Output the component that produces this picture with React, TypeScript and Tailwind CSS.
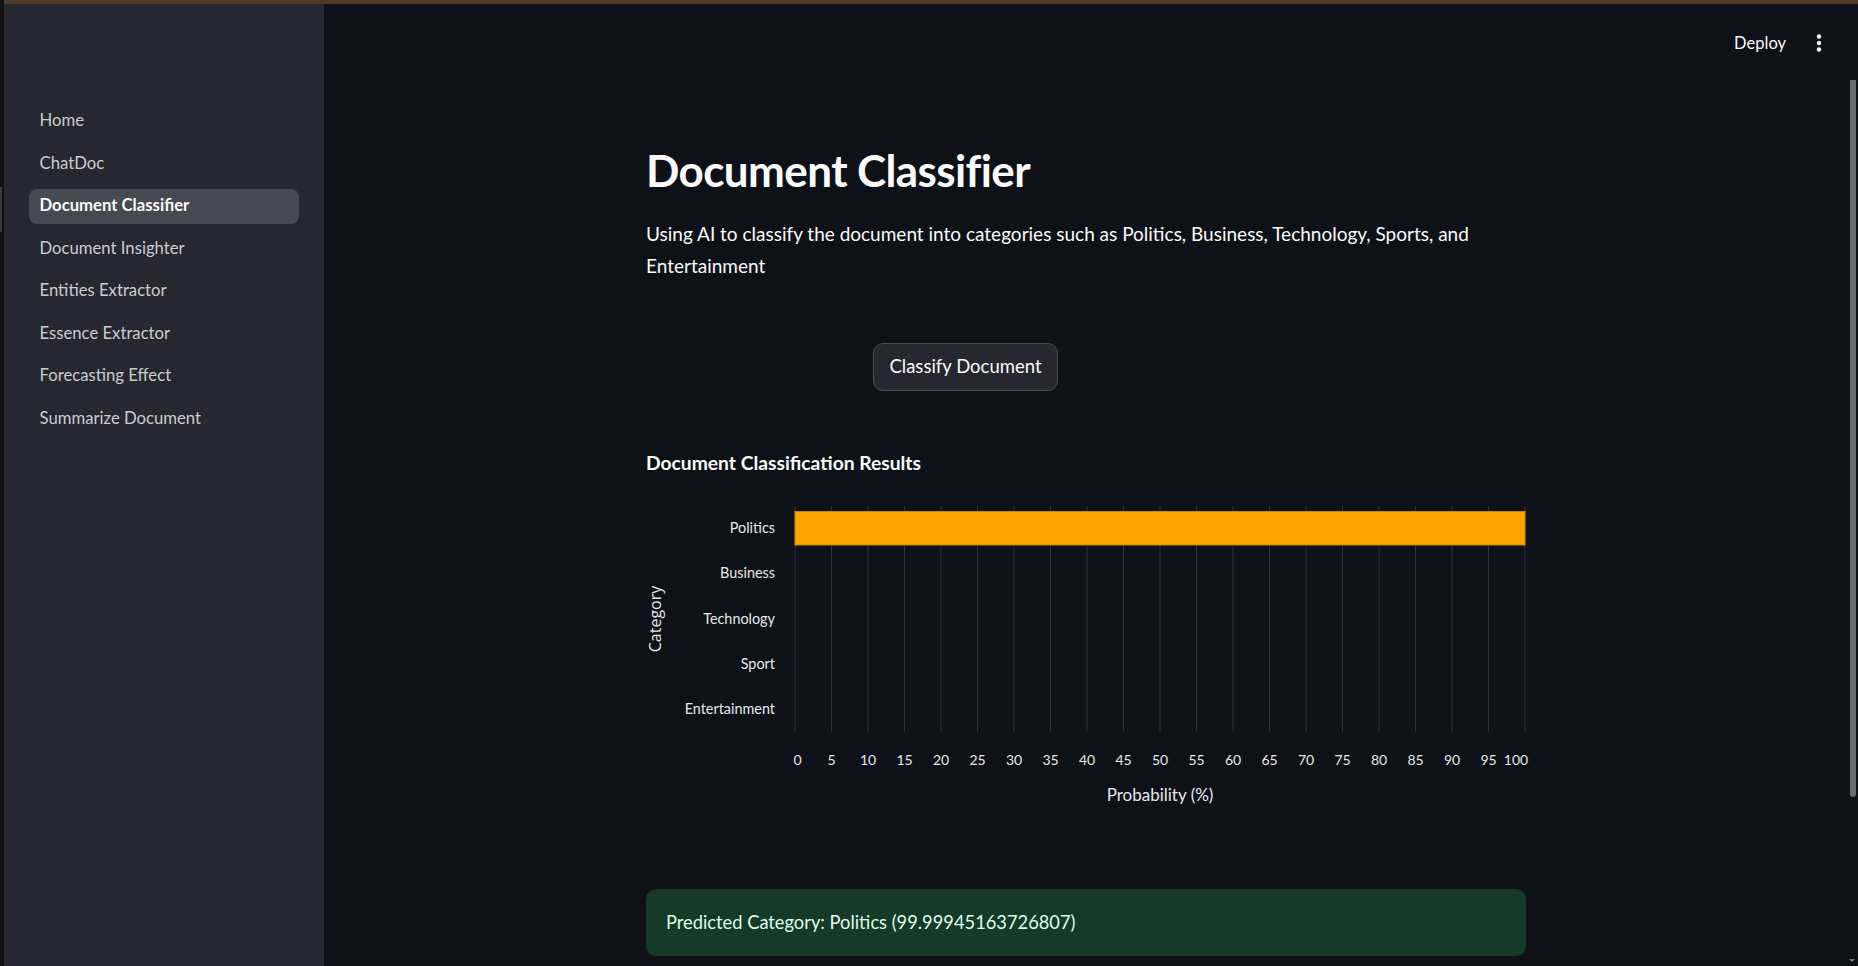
import React from "react";

const navItems = [
  "Home",
  "ChatDoc",
  "Document Classifier",
  "Document Insighter",
  "Entities Extractor",
  "Essence Extractor",
  "Forecasting Effect",
  "Summarize Document",
];

const categories = [
  { name: "Politics", y: 53 },
  { name: "Business", y: 98 },
  { name: "Technology", y: 144.5 },
  { name: "Sport", y: 189.6 },
  { name: "Entertainment", y: 234.6 },
];

function Chart() {
  const ticks = Array.from({ length: 21 }, (_, i) => i * 5);
  const x0 = 149;
  const scale = 7.3;
  return (
    <svg width="880" height="380" className="block overflow-visible">
      {ticks.map((t) => (
        <line
          key={`g${t}`}
          x1={x0 + t * scale}
          x2={x0 + t * scale}
          y1={32}
          y2={258}
          stroke="#2d3038"
          strokeWidth={1}
        />
      ))}
      <rect x={x0} y={37.5} width={730} height={33.5} fill="#ffa500" stroke="#c4860e" strokeWidth={1} />
      {categories.map((c) => (
        <text
          key={c.name}
          x={129}
          y={c.y}
          textAnchor="end"
          dominantBaseline="central"
          fill="#e8e8ea"
          fontSize="14.4"
          fontFamily="Lato, sans-serif"
        >
          {c.name}
        </text>
      ))}
      {ticks.map((t) => {
        let x = x0 + t * scale;
        if (t === 0) x += 2.5;
        if (t === 100) x -= 9;
        return (
          <text
            key={`t${t}`}
            x={x}
            y={285}
            textAnchor="middle"
            dominantBaseline="central"
            fill="#e8e8ea"
            fontSize="14"
            fontFamily="Lato, sans-serif"
          >
            {t}
          </text>
        );
      })}
      <text
        x={514}
        y={320}
        textAnchor="middle"
        dominantBaseline="central"
        fill="#e8e8ea"
        fontSize="17"
        fontFamily="Lato, sans-serif"
      >
        Probability (%)
      </text>
      <text
        x={9}
        y={145}
        textAnchor="middle"
        dominantBaseline="central"
        fill="#e8e8ea"
        fontSize="16"
        fontFamily="'Open Sans', sans-serif"
        transform="rotate(-90 9 145)"
      >
        Category
      </text>
    </svg>
  );
}

export default function App() {
  return (
    <div className="relative flex h-[966px] w-[1858px] overflow-hidden bg-[#0e1117] font-['Lato',sans-serif]">
      <div className="relative h-full w-[4px] shrink-0 bg-[#101011]">
        <div className="absolute left-0 top-[187px] h-[45px] w-[2px] bg-[#3a3a3c]" />
      </div>
      <div className="flex h-full flex-1 flex-col">
        <div className="h-[4px] w-full shrink-0 bg-[#4f3a25]" />
        <div className="flex flex-1">
          {/* Sidebar */}
          <aside className="w-[320px] shrink-0 bg-[#262730] px-[25px] pt-[99.5px]">
            <nav className="flex flex-col gap-[7.5px]">
              {navItems.map((item) => {
                const active = item === "Document Classifier";
                return (
                  <div
                    key={item}
                    className={
                      active
                        ? "flex h-[35px] items-center rounded-[8px] bg-[#464852] px-[10.5px] text-[16.7px] font-bold text-[#fafafa]"
                        : "flex h-[35px] items-center rounded-[8px] px-[10.5px] text-[16.7px] text-[#cbccd1]"
                    }
                  >
                    {item}
                  </div>
                );
              })}
            </nav>
          </aside>

          {/* Main */}
          <main className="relative flex-1">
            <header className="flex h-[78px] items-center justify-end pr-[36px]">
              <span className="text-[16.5px] text-[#fafafa]">Deploy</span>
              <svg width="6" height="18" viewBox="0 0 6 18" className="ml-[30px]">
                <circle cx="3" cy="2.5" r="2.2" fill="#fafafa" />
                <circle cx="3" cy="9" r="2.2" fill="#fafafa" />
                <circle cx="3" cy="15.5" r="2.2" fill="#fafafa" />
              </svg>
            </header>

            <div className="ml-[322px] w-[880px]">
              <h1 className="mt-[62.2px] text-[44px] font-bold leading-[1.2] tracking-[-0.6px] text-[#fafafa]">
                Document Classifier
              </h1>
              <p className="mt-[21.2px] text-[19px] leading-[32px] text-[#fafafa]">
                Using AI to classify the document into categories such as Politics, Business, Technology, Sports, and
                <br />
                Entertainment
              </p>
              <div className="mt-[61px]">
                <button className="ml-[227px] flex h-[48px] w-[185px] items-center justify-center rounded-[10px] border border-[#4a4b53] bg-[#262730] text-[18.5px] text-[#fafafa]">
                  Classify Document
                </button>
              </div>
              <h3 className="mt-[59.8px] h-[23px] text-[19.25px] font-bold leading-[24px] text-[#fafafa]">
                Document Classification Results
              </h3>
              <Chart />
              <div className="mt-[35px] flex h-[67px] items-center rounded-[10px] bg-[#173928] px-[20px] text-[18.3px] text-[#dffde9]">
                Predicted Category: Politics (99.99945163726807)
              </div>
            </div>

            {/* Scrollbar */}
            <div className="absolute right-[2px] top-[76px] h-[717px] w-[6px] rounded-b-[3px] bg-[#6b6c70]" />
            <div className="absolute bottom-[4px] right-[3px] h-0 w-0 border-x-[3px] border-t-[3px] border-x-transparent border-t-[#7a7b80]" />
          </main>
        </div>
      </div>
    </div>
  );
}
